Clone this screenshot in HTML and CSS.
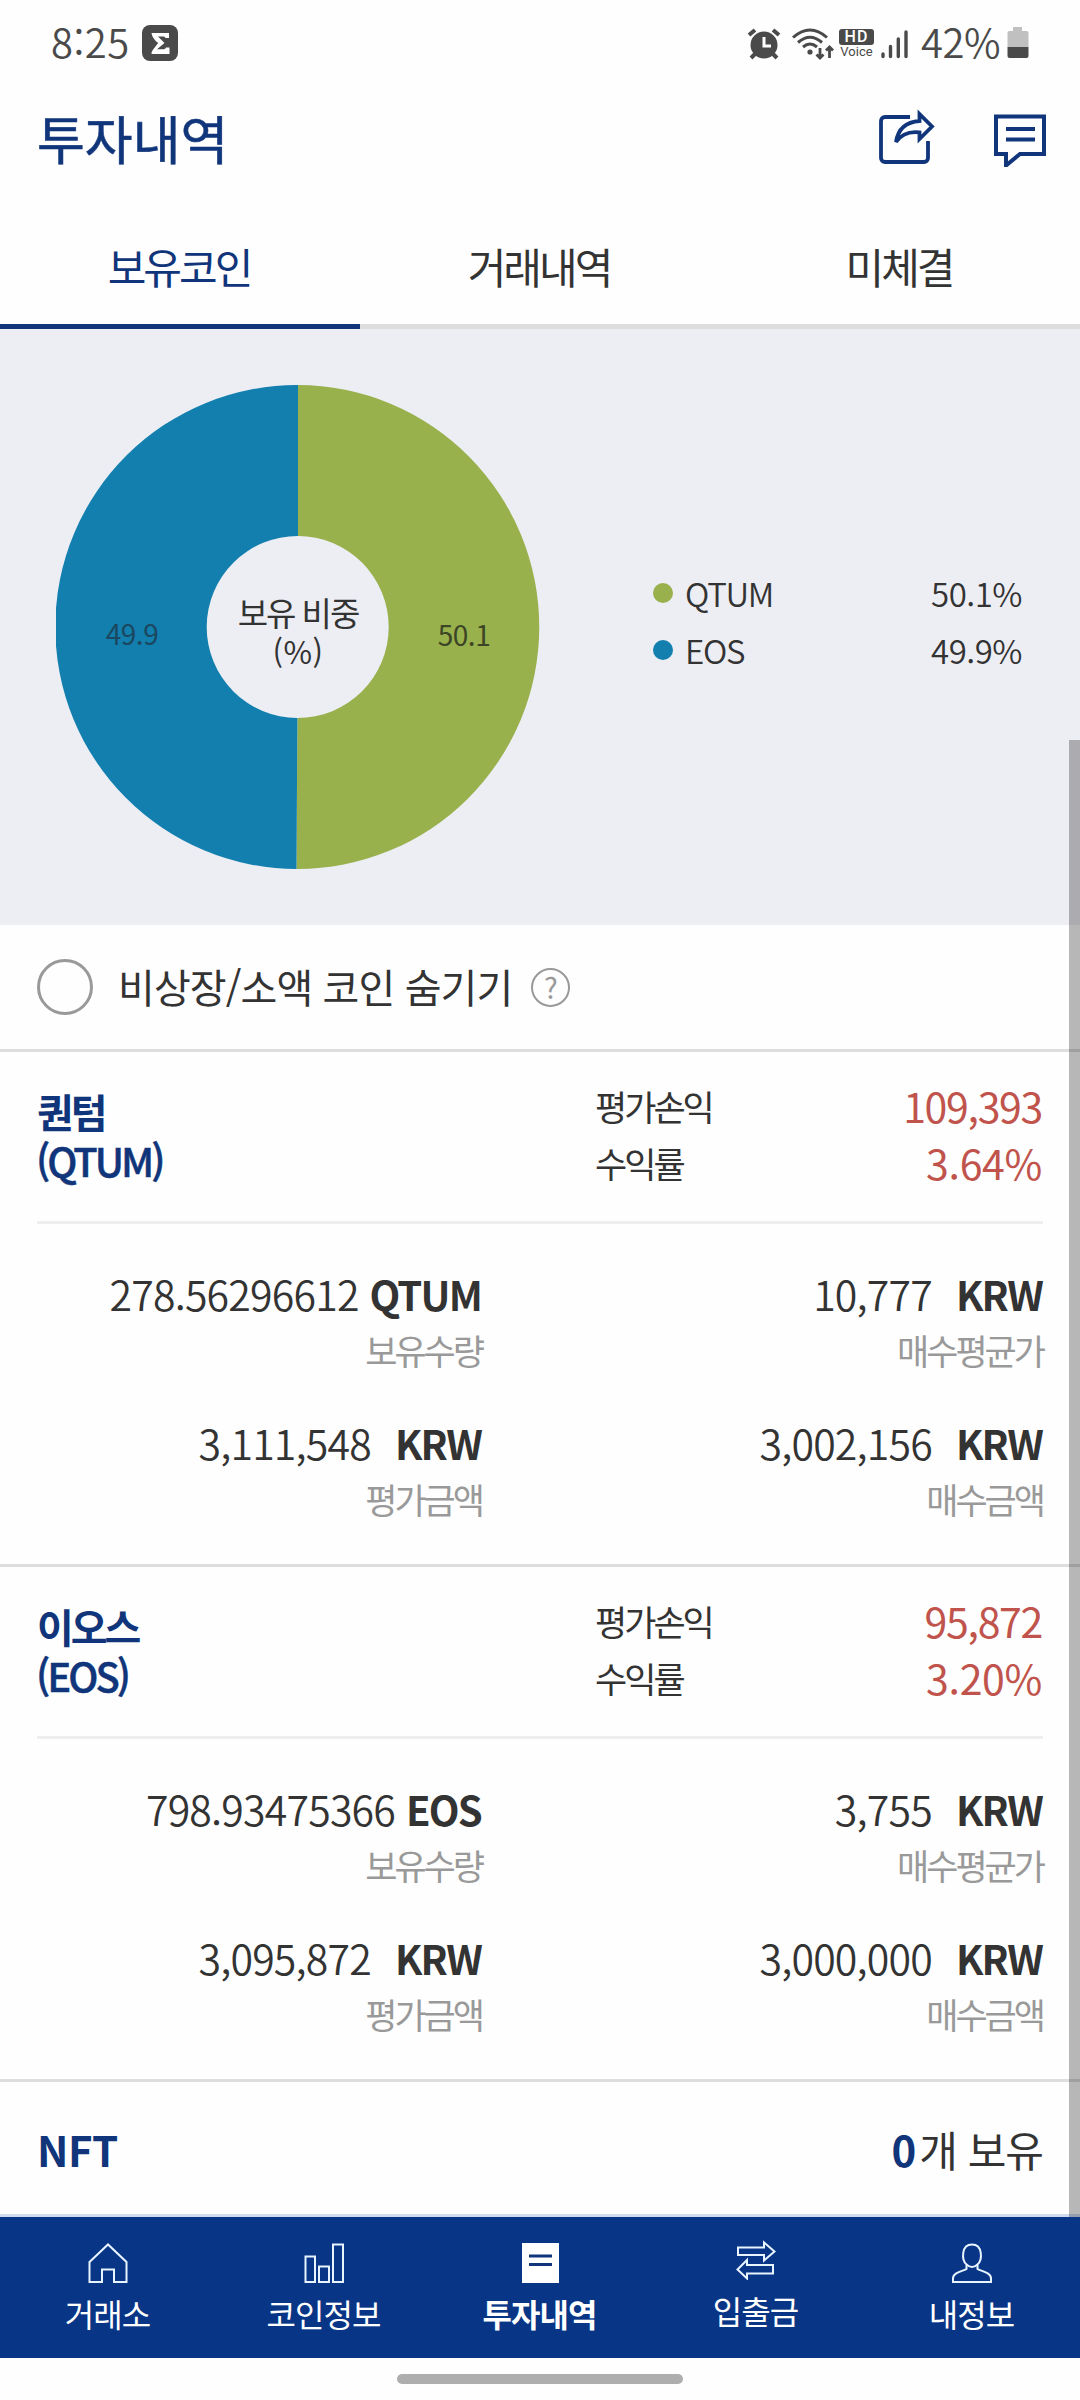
FILE: index.html
```html
<!DOCTYPE html>
<html lang="ko">
<head>
  <meta charset="UTF-8">
  <meta name="viewport" content="width=device-width, initial-scale=1.0">
  <title>투자내역</title>
  <link rel="stylesheet" href="styles.css">
</head>
<body>
  <div class="app">
    <div class="status-bar">
      <div class="status-left">
        <span class="clock">8:25</span>
        <svg class="app-badge" width="36" height="36" viewBox="0 0 36 36">
          <rect width="36" height="36" rx="8" fill="#4a4a4a"/>
          <path d="M9.500 8H27v5h-3.500c-.5-1.200-1.500-1.600-3-1.600H16l6.500 6.600-7.500 6.300h6c1.700 0 2.600-.6 3-1.800h3.500V29H9.500c.1-3.500 3.600-6.500 6.700-10.900C12.800 15.500 10 12 9.500 8z" fill="#fff"/>
        </svg>
      </div>
      <div class="status-right">
        <svg width="34" height="32" viewBox="0 0 34 32" fill="none" stroke="#4a4a4a">
          <circle cx="17" cy="17" r="13.500" fill="#4a4a4a" stroke="none"/>
          <path d="M2 7l6-5M32 7l-6-5" stroke-width="4"/>
          <path d="M8 26l-4 4M26 26l4 4" stroke-width="4"/>
          <path d="M17 9v9h7" stroke="#fff" stroke-width="3"/>
        </svg>
        <svg class="wifi" width="43" height="32" viewBox="0 0 43 32" fill="none" stroke="#4a4a4a" stroke-width="3">
          <path d="M1 9.500Q18-5.500 35 9.500M6 14.500Q18 4 30 14.500M11 19Q18 13 25 19"/>
          <circle cx="18" cy="24" r="2.600" fill="#4a4a4a" stroke="none"/>
          <path d="M28 20v10M24.500 26.500L28 30l3.500-3.500M37.500 30V19M34 22.500l3.500-3.500 3.500 3.500" stroke-width="2.800"/>
        </svg>
        <span class="hd"><b>HD</b><small>Voice</small></span>
        <svg class="signal" width="27" height="30" viewBox="0 0 27 30" stroke="#4a4a4a" stroke-width="3.400" stroke-linecap="round">
          <path d="M2 25v2.500M9.500 17.500v10M17.300 10v17.500M25 3v24.500"/>
        </svg>
        <span class="battery-text">42%</span>
        <svg class="battery" width="22" height="32" viewBox="0 0 22 32">
          <path d="M6 0h9v4h4.500a2 2 0 0 1 2 2v14H.5V6a2 2 0 0 1 2-2H6z" fill="#c0c0c0"/>
          <path d="M.5 20h21v9a2 2 0 0 1-2 2h-17a2 2 0 0 1-2-2z" fill="#4a4a4a"/>
        </svg>
      </div>
    </div>

    <div class="header">
      <h1 class="title">투자내역</h1>
      <div class="header-icons">
        <svg width="57" height="58" viewBox="0 0 57 58" fill="none" stroke="#10357a" stroke-width="3.800">
          <path d="M32 8H7a4 4 0 0 0-4 4v37a4 4 0 0 0 4 4h39a4 4 0 0 0 4-4V32"/>
          <path d="M18 33C20 20 27 13 41.500 12V5L54 17.500 41.500 30v-6.500C30 22 23 26 18 33z"/>
        </svg>
        <svg width="54" height="58" viewBox="0 0 54 58" fill="none" stroke="#10357a" stroke-width="4">
          <path d="M3 7.500h48V45H27L13 56.500V45H3z"/>
          <path d="M13 20h29M13 30.500h29"/>
        </svg>
      </div>
    </div>

    <div class="tabs">
      <div class="tab active">보유코인</div>
      <div class="tab">거래내역</div>
      <div class="tab">미체결</div>
    </div>

    <div class="chart-section">
      <svg class="donut" width="484" height="484" viewBox="0 0 484 484">
        <path d="M242 0A242 242 0 1 1 240.500 484L241.400 333A91 91 0 0 0 242 151z" fill="#98b14d"/>
        <path d="M242 0A242 242 0 0 0 240.500 484L241.400 333A91 91 0 0 1 242 151z" fill="#127fae"/>
        <text class="slice-label blue" x="76" y="260">49.9</text>
        <text class="slice-label green" x="408" y="261">50.1</text>
        <text class="donut-title" x="242" y="241">보유 비중</text>
        <text class="donut-title sub" x="242" y="279">(%)</text>
      </svg>
      <div class="legend">
        <div class="legend-row">
          <span class="dot green"></span>
          <span class="symbol">QTUM</span>
          <span class="percent">50.1%</span>
        </div>
        <div class="legend-row">
          <span class="dot blue"></span>
          <span class="symbol">EOS</span>
          <span class="percent">49.9%</span>
        </div>
      </div>
    </div>

    <div class="filter">
      <span class="radio"></span>
      <span class="filter-text">비상장/소액 코인 숨기기</span>
      <span class="help">?</span>
    </div>

    <div class="coin">
      <div class="coin-head">
        <div class="coin-name">퀀텀<span class="ticker">(QTUM)</span></div>
        <div class="profit">
          <span>평가손익</span><span class="up">109,393</span>
          <span>수익률</span><span class="up rate">3.64%</span>
        </div>
      </div>
      <div class="amounts">
        <div class="amount">
          <div class="value">278.56296612<b class="coin-unit">QTUM</b></div>
          <div class="label">보유수량</div>
        </div>
        <div class="amount">
          <div class="value">10,777<b>KRW</b></div>
          <div class="label">매수평균가</div>
        </div>
        <div class="amount">
          <div class="value">3,111,548<b>KRW</b></div>
          <div class="label">평가금액</div>
        </div>
        <div class="amount">
          <div class="value">3,002,156<b>KRW</b></div>
          <div class="label">매수금액</div>
        </div>
      </div>
    </div>

    <div class="coin">
      <div class="coin-head">
        <div class="coin-name">이오스<span class="ticker">(EOS)</span></div>
        <div class="profit">
          <span>평가손익</span><span class="up">95,872</span>
          <span>수익률</span><span class="up rate">3.20%</span>
        </div>
      </div>
      <div class="amounts">
        <div class="amount">
          <div class="value">798.93475366<b class="coin-unit">EOS</b></div>
          <div class="label">보유수량</div>
        </div>
        <div class="amount">
          <div class="value">3,755<b>KRW</b></div>
          <div class="label">매수평균가</div>
        </div>
        <div class="amount">
          <div class="value">3,095,872<b>KRW</b></div>
          <div class="label">평가금액</div>
        </div>
        <div class="amount">
          <div class="value">3,000,000<b>KRW</b></div>
          <div class="label">매수금액</div>
        </div>
      </div>
    </div>

    <div class="nft">
      <span class="nft-name">NFT</span>
      <span class="nft-count"><b>0</b>개 보유</span>
    </div>

    <div class="bottom-nav">
      <div class="nav-item">
        <svg width="40" height="40" viewBox="0 0 40 40">
          <path d="M1.500 19L20 1.500 38.500 19v20H26V26.500H14V39H1.500z"/>
        </svg>
        <span>거래소</span>
      </div>
      <div class="nav-item">
        <svg width="40" height="40" viewBox="0 0 40 40">
          <path d="M1.500 13.500H11V39H1.500zM15 23.500h10V39H15zM29 1.500h10V39H29z"/>
        </svg>
        <span>코인정보</span>
      </div>
      <div class="nav-item active">
        <svg width="40" height="40" viewBox="0 0 40 40">
          <path class="solid" d="M2 0h37v40H2z"/>
          <path class="lines" d="M9 13h23M9 21.500h23"/>
        </svg>
        <span>투자내역</span>
      </div>
      <div class="nav-item transfer">
        <svg width="40" height="40" viewBox="0 0 40 40">
          <path d="M2 7.500h26V2.500L38.500 11.500 28 20.500V15H2zM37 25H11v-5L1.500 29.500 11 38.500V33.500h26z"/>
        </svg>
        <span>입출금</span>
      </div>
      <div class="nav-item">
        <svg width="40" height="40" viewBox="0 0 40 40">
          <path d="M14.500 21.500C9.500 17 9 1.500 20 1.500s10.500 15.500 5.500 20v4.500c4 2.500 13.500 3 13.500 9.500V39H1v-3.500C1 29 10.500 28.500 14.500 26z"/>
          <path d="M14.500 21.500q5.500 5 11 0"/>
        </svg>
        <span>내정보</span>
      </div>
    </div>

    <div class="gesture"><div class="gesture-bar"></div></div>
    <div class="scrollbar"></div>
  </div>
</body>
</html>
```
FILE: styles.css
```css
* {
  box-sizing: border-box;
}

body {
  margin: 0;
  background: #fefefe;
  color: #333;
  font-family: "Noto Sans CJK KR", "Noto Sans", sans-serif;
}

.app {
  position: relative;
  width: 1080px;
  height: 2400px;
  overflow: hidden;
  display: flex;
  flex-direction: column;
}

svg {
  display: block;
  flex: none;
}

/* status bar */
.status-bar {
  height: 88px;
  padding: 0 51px;
  display: flex;
  justify-content: space-between;
  align-items: center;
  color: #4a4a4a;
}

.status-left,
.status-right {
  display: flex;
  align-items: center;
}

.clock,
.battery-text {
  font-size: 40px;
  font-weight: 350;
  line-height: 60px;
  margin-top: -6px;
}

.clock {
  width: 91px;
  letter-spacing: 0.5px;
}

.app-badge {
  margin-top: -2px;
}

.wifi {
  margin-left: 11px;
}

.hd {
  width: 35px;
  margin-left: 4px;
  font-family: Roboto, sans-serif;
}

.hd b,
.hd small {
  display: block;
  text-align: center;
}

.hd b {
  height: 16px;
  line-height: 16px;
  font-size: 16px;
  font-weight: 500;
  letter-spacing: 1px;
  color: #fff;
  background: #4a4a4a;
  border-radius: 3px;
}

.hd small {
  font-size: 13px;
  line-height: 14px;
}

.signal {
  margin-left: 7px;
}

.battery-text {
  width: 84px;
  margin-left: 13px;
  margin-right: 1px;
  letter-spacing: -0.5px;
}

.battery {
  margin: -3px 0 0 1px;
}

/* header */
.header {
  height: 106px;
  padding: 0 33px 0 37px;
  display: flex;
  justify-content: space-between;
  align-items: center;
}

.title {
  margin: -6px 0 0;
  font-size: 52px;
  font-weight: 400;
  line-height: 76px;
  color: #10357a;
  -webkit-text-stroke: 0.6px #10357a;
}

.header-icons {
  display: flex;
  gap: 58px;
  margin-top: -6px;
}

/* tabs */
.tabs {
  height: 135px;
  display: flex;
}

.tab {
  flex: 1;
  padding: 41px 2px 0 0;
  border-bottom: 5px solid #ddd;
  text-align: center;
  font-size: 42px;
  line-height: 62px;
  letter-spacing: -3px;
}

.tab.active {
  color: #10357a;
  border-color: #10357a;
}

/* chart */
.chart-section {
  height: 596px;
  padding: 56px 58px 0 56px;
  background: #edeef4;
  display: flex;
}

.slice-label {
  font-size: 28px;
  letter-spacing: -0.5px;
  text-anchor: middle;
}

.slice-label.blue {
  fill: #1b4860;
}

.slice-label.green {
  fill: #3c4526;
}

.donut-title {
  font-size: 33px;
  letter-spacing: -2px;
  text-anchor: middle;
  fill: #333;
}

.donut-title.sub {
  font-size: 31px;
  letter-spacing: 0.5px;
}

.legend {
  flex: 1;
  margin-left: 113px;
  padding-top: 179px;
}

.legend-row {
  height: 57px;
  display: flex;
  align-items: center;
  font-size: 33px;
  font-weight: 350;
}

.symbol {
  letter-spacing: -1.3px;
}

.dot {
  width: 20px;
  height: 20px;
  margin-right: 12px;
  border-radius: 50%;
}

.dot.green {
  background: #98b14d;
}

.dot.blue {
  background: #127fae;
}

.percent {
  margin-left: auto;
  letter-spacing: -0.5px;
}

/* filter row */
.filter {
  height: 127px;
  padding-left: 37px;
  border-bottom: 3px solid #ddd;
  display: flex;
  align-items: center;
}

.radio {
  width: 56px;
  height: 56px;
  border: 3px solid #999;
  border-radius: 50%;
}

.filter-text {
  margin: -2px 0 0 25px;
  font-size: 40px;
  letter-spacing: -0.9px;
}

.help {
  width: 39px;
  height: 39px;
  margin-left: 19px;
  border: 2px solid #999;
  border-radius: 50%;
  font-size: 29px;
  line-height: 33px;
  text-align: center;
  color: #999;
}

/* coins */
.coin {
  height: 515px;
  padding: 0 37px;
  border-bottom: 3px solid #ddd;
}

.coin-head {
  height: 172px;
  padding-top: 24px;
  border-bottom: 3px solid #eee;
  display: flex;
  justify-content: space-between;
}

.coin-name {
  margin-top: 11px;
  font-size: 40px;
  font-weight: 700;
  line-height: 49px;
  letter-spacing: -3px;
  color: #10357a;
}

.ticker {
  display: block;
  margin-left: -1px;
  font-weight: 500;
  letter-spacing: -3px;
  -webkit-text-stroke: 0.5px #10357a;
}

.profit {
  width: 448px;
  display: grid;
  grid-template-columns: 1fr auto;
  grid-auto-rows: 57px;
  align-content: start;
  padding-top: 1px;
  font-size: 35px;
  line-height: 57px;
  letter-spacing: -3px;
}

.up {
  padding-right: 1px;
  font-size: 41px;
  letter-spacing: -1.3px;
  text-align: right;
  color: #c0544d;
}

.rate {
  letter-spacing: -0.3px;
}

.amounts {
  padding-top: 40px;
  display: grid;
  grid-template-columns: 445px 1fr;
  row-gap: 35px;
}

.amount {
  text-align: right;
  line-height: 57px;
}

.value {
  height: 57px;
  padding: 1px 1px 0 0;
  font-size: 41px;
  font-weight: 350;
  letter-spacing: -0.8px;
}

.value b {
  margin-left: 24px;
  font-size: 40px;
  font-weight: 700;
  letter-spacing: -1.8px;
}

.value .coin-unit {
  margin-left: 11px;
}

.label {
  height: 57px;
  font-size: 35px;
  letter-spacing: -3px;
  color: #999;
}

/* nft */
.nft {
  height: 132px;
  padding: 0 37px;
  display: flex;
  justify-content: space-between;
  align-items: center;
  font-size: 42px;
}

.nft-name,
.nft-count b {
  font-weight: 700;
  color: #10357a;
}

.nft-name {
  letter-spacing: -0.5px;
}

.nft-count {
  letter-spacing: -1px;
}

.nft-count b {
  margin-right: 4px;
}

/* bottom navigation */
.bottom-nav {
  height: 144px;
  border-top: 3px solid #cfdcf0;
  background: #083585;
  display: flex;
}

.nav-item {
  flex: 1;
  padding: 26px 1px 0 0;
  display: flex;
  flex-direction: column;
  align-items: center;
  font-size: 32px;
  line-height: 48px;
  letter-spacing: -1px;
  color: #fff;
}

.nav-item svg {
  margin-bottom: 6px;
  fill: none;
  stroke: #e8f4ff;
  stroke-width: 2;
}

.nav-item.active {
  font-weight: 700;
}

.nav-item.transfer {
  padding-top: 23px;
}

.nav-item .solid {
  fill: #fff;
  stroke: none;
}

.nav-item .lines {
  stroke: #10357a;
  stroke-width: 3;
}

.gesture {
  flex: 1;
  padding-top: 16px;
}

.gesture-bar {
  width: 286px;
  height: 10px;
  margin: 0 auto;
  border-radius: 5px;
  background: #aeaeae;
}

.scrollbar {
  position: absolute;
  top: 740px;
  right: 0;
  width: 11px;
  height: 1477px;
  background: rgba(0, 0, 0, 0.28);
}
```
